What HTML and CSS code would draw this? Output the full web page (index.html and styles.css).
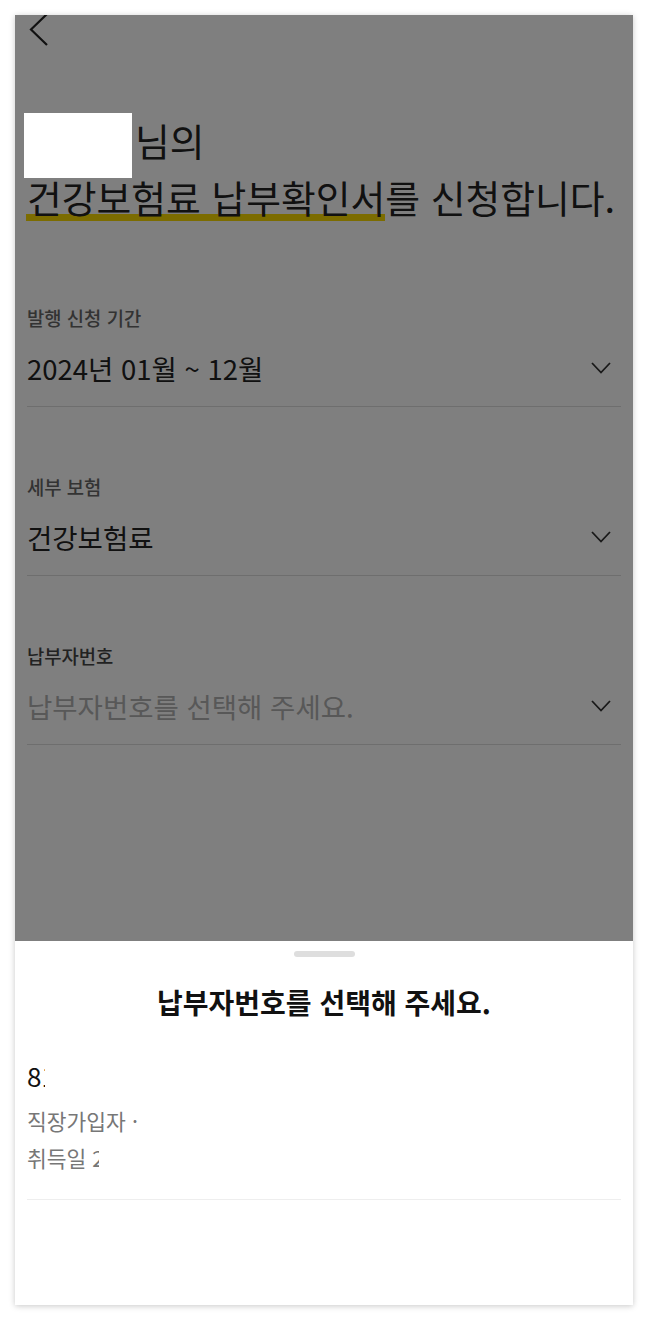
FILE: index.html
```html
<!DOCTYPE html>
<html lang="ko">
<head>
<meta charset="utf-8">
<title>건강보험료 납부확인서 신청</title>
<link rel="stylesheet" href="styles.css">
</head>
<body>
<div class="frame">
  <div class="page">
    <header class="header">
      <svg class="back" width="20" height="33" viewBox="0 0 20 33" aria-hidden="true">
        <path d="M18 1 L2 16.5 L18 32" fill="none" stroke="#222" stroke-width="2.2" stroke-linecap="butt" stroke-linejoin="miter"/>
      </svg>
    </header>
    <h1 class="title"><span class="name-mask"></span>님의<br><span class="hl">건강보험료 납부확인서</span>를 신청합니다.</h1>

    <div class="field first">
      <div class="label">발행 신청 기간</div>
      <div class="row">
        <span class="value">2024년 01월 ~ 12월</span>
        <svg class="chev" width="20" height="12" viewBox="0 0 20 12" aria-hidden="true"><path d="M1 1 L10 10.5 L19 1" fill="none" stroke="#333" stroke-width="1.8"/></svg>
      </div>
    </div>
    <div class="field">
      <div class="label">세부 보험</div>
      <div class="row">
        <span class="value">건강보험료</span>
        <svg class="chev" width="20" height="12" viewBox="0 0 20 12" aria-hidden="true"><path d="M1 1 L10 10.5 L19 1" fill="none" stroke="#333" stroke-width="1.8"/></svg>
      </div>
    </div>
    <div class="field">
      <div class="label active">납부자번호</div>
      <div class="row">
        <span class="value placeholder">납부자번호를 선택해 주세요.</span>
        <svg class="chev" width="20" height="12" viewBox="0 0 20 12" aria-hidden="true"><path d="M1 1 L10 10.5 L19 1" fill="none" stroke="#333" stroke-width="1.8"/></svg>
      </div>
    </div>
  </div>

  <div class="dim"></div>

  <section class="sheet">
    <div class="handle"></div>
    <h2 class="sheet-title">납부자번호를 선택해 주세요.</h2>
    <div class="option">
      <div class="opt-no"><span class="clip clip-no">81234567890</span></div>
      <div class="opt-sub"><span class="clip clip-type">직장가입자 · 사업장</span></div>
      <div class="opt-sub"><span class="clip clip-date">취득일 2020.01.01</span></div>
    </div>
  </section>
</div>
</body>
</html>
```

FILE: styles.css
```css
* { box-sizing: border-box; }

html, body {
  margin: 0;
  padding: 0;
  background: #ffffff;
}

body {
  font-family: "Noto Sans CJK KR", "Noto Sans", sans-serif;
  color: #222;
}

.frame {
  position: relative;
  margin: 15px;
  width: 618px;
  height: 1290px;
  overflow: hidden;
  background: #ffffff;
  box-shadow: 0 1px 6px rgba(0, 0, 0, 0.22);
}

.page {
  padding: 0 12px;
}

.header {
  height: 40px;
  position: relative;
}

.back {
  display: block;
  margin-left: 2px;
  margin-top: -2px;
}

.title {
  margin: 58px 0 13px;
  font-size: 37.8px;
  font-weight: 400;
  line-height: 57px;
  letter-spacing: 0;
  color: #222;
  white-space: nowrap;
}

.name-mask {
  position: relative;
  z-index: 3;
  display: inline-block;
  width: 108px;
  height: 65px;
  margin: 0 3px -22px -3px;
  background: #ffffff;
}

.hl {
  background: linear-gradient(to top, transparent 0, transparent 3px, #f8d800 3px, #f8d800 10px, transparent 10px);
  padding-left: 1px;
  margin-left: -1px;
}

.field {
  padding-top: 68px;
  padding-bottom: 20px;
  border-bottom: 1px solid #dcdcdc;
}

.label {
  font-size: 18.8px;
  line-height: 24px;
  font-weight: 500;
  color: #666;
}

.label.active {
  color: #444;
}

.row {
  margin-top: 20px;
  display: flex;
  align-items: center;
  justify-content: space-between;
  height: 36px;
}

.value {
  font-size: 27.5px;
  line-height: 36px;
  color: #222;
}

.value.placeholder {
  color: #b0b0b0;
}

.chev {
  display: block;
  margin-right: 10px;
}

.dim {
  position: absolute;
  inset: 0;
  z-index: 2;
  background: rgba(0, 0, 0, 0.5);
}

.sheet {
  position: absolute;
  left: 0;
  right: 0;
  bottom: 0;
  height: 364px;
  z-index: 4;
  background: #ffffff;
  padding: 10px 12px 0;
}

.handle {
  width: 61px;
  height: 6px;
  margin: 0 auto;
  border-radius: 3px;
  background: #dedede;
}

.sheet-title {
  margin: 26px 0 0;
  text-align: center;
  font-size: 28px;
  line-height: 38px;
  font-weight: 700;
  color: #111;
}

.option {
  margin-top: 37px;
  padding-bottom: 23px;
  border-bottom: 1px solid #eeeeee;
}

.opt-no {
  font-size: 26px;
  line-height: 36px;
  height: 36px;
  color: #111;
  margin-bottom: 8px;
}

.opt-sub {
  font-size: 21.5px;
  line-height: 37px;
  height: 37px;
  color: #777;
}

.clip {
  display: inline-block;
  overflow: hidden;
  white-space: nowrap;
  vertical-align: top;
}

.clip-no { width: 18px; }
.clip-type { width: 114px; }
.clip-date { width: 72px; }
```
